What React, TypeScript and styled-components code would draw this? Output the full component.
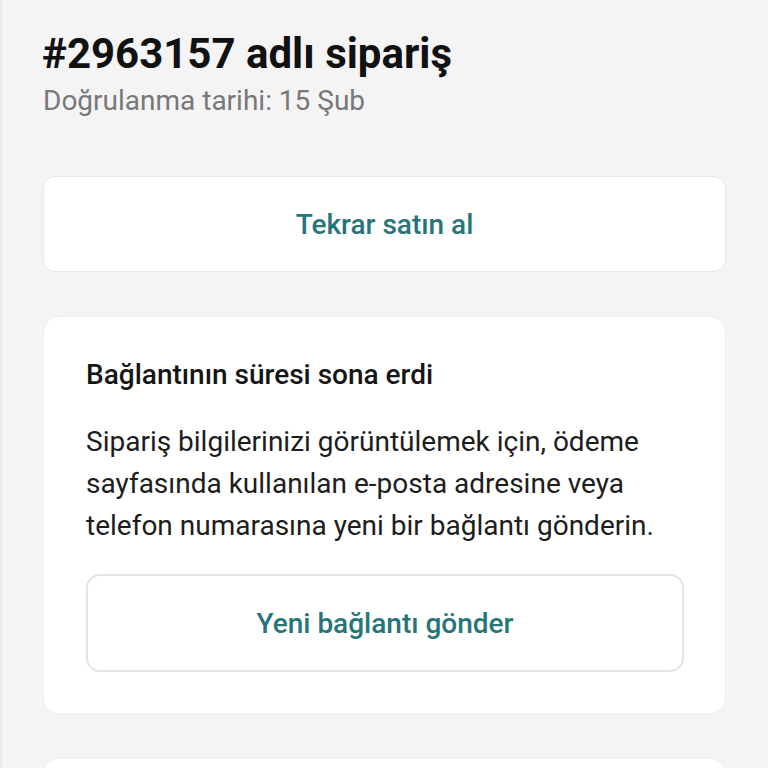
import React from "react";
import styled, { createGlobalStyle } from "styled-components";

const Global = createGlobalStyle`
  html, body { margin: 0; padding: 0; background: #f4f4f4; }
  body { font-family: Roboto, "Noto Sans", "Liberation Sans", sans-serif; -webkit-font-smoothing: antialiased; }
`;

const Page = styled.div`
  min-height: 768px;
  box-sizing: border-box;
  padding: 30px 42px 0 41px;
  display: flex;
  flex-direction: column;
  border-left: 2px solid #ebebeb;
`;

const Header = styled.header`
  display: flex;
  flex-direction: column;
  gap: 7px;
  margin-bottom: 59px;
`;

const Title = styled.h1`
  margin: 0 0 0 -1px;
  font-size: 42px;
  line-height: 48px;
  font-weight: 700;
  color: #111;
`;

const Subtitle = styled.div`
  font-size: 28px;
  line-height: 32px;
  color: #787878;
`;

const Card = styled.section<{ $radius?: number }>`
  background: #fff;
  border-radius: ${(p) => p.$radius ?? 16}px;
  border: 1px solid #e9e9e9;
  box-sizing: border-box;
`;

const ButtonCard = styled(Card)`
  height: 96px;
  display: flex;
  align-items: center;
  justify-content: center;
  margin-bottom: 44px;
`;

const ActionText = styled.span`
  color: #267579;
  font-size: 28px;
  font-weight: 500;
`;

const InfoCard = styled(Card)`
  padding: 42px 41px 41px 42px;
  display: flex;
  flex-direction: column;
  border-color: #f1f1f1;
`;

const InfoTitle = styled.h2`
  margin: 0 0 30px 0;
  font-size: 28px;
  line-height: 32px;
  font-weight: 500;
  color: #151515;
`;

const InfoText = styled.p`
  margin: 0 0 27px 0;
  font-size: 28px;
  line-height: 42px;
  color: #1d1d1d;
`;

const OutlineButton = styled.button`
  height: 98px;
  border: 2px solid #e4e4e4;
  border-radius: 14px;
  background: #fff;
  display: flex;
  align-items: center;
  justify-content: center;
  cursor: pointer;
  font-family: inherit;
  padding: 0;
`;

const NextCard = styled(Card)`
  margin-top: 44px;
  height: 60px;
  border-color: #f1f1f1;
`;

export default function App() {
  return (
    <>
      <Global />
      <Page>
        <Header>
          <Title>#2963157 adlı sipariş</Title>
          <Subtitle>Doğrulanma tarihi: 15 Şub</Subtitle>
        </Header>
        <ButtonCard $radius={12}>
          <ActionText>Tekrar satın al</ActionText>
        </ButtonCard>
        <InfoCard>
          <InfoTitle>Bağlantının süresi sona erdi</InfoTitle>
          <InfoText>
            Sipariş bilgilerinizi görüntülemek için, ödeme sayfasında kullanılan e-posta adresine veya telefon numarasına yeni bir bağlantı gönderin.
          </InfoText>
          <OutlineButton>
            <ActionText>Yeni bağlantı gönder</ActionText>
          </OutlineButton>
        </InfoCard>
        <NextCard />
      </Page>
    </>
  );
}
